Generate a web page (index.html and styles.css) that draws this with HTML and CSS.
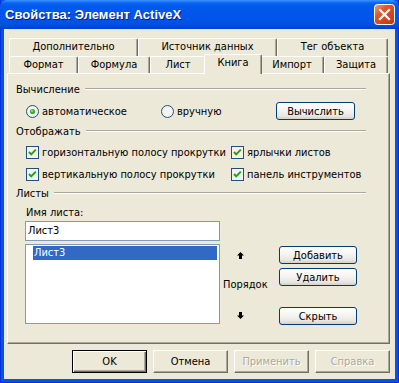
FILE: index.html
```html
<!DOCTYPE html>
<html lang="ru">
<head>
    <meta charset="UTF-8">
    <title>Свойства: Элемент ActiveX</title>
    <link rel="stylesheet" href="styles.css">
</head>
<body>
    <div class="window">
        <div class="titlebar">
            <span class="title">Свойства: Элемент ActiveX</span>
            <span class="close">
                <svg width="21" height="21" viewBox="0 0 21 21">
                    <defs>
                        <linearGradient id="cg" x1="0" y1="0" x2="1" y2="1">
                            <stop offset="0" stop-color="#F0A080"/>
                            <stop offset="0.35" stop-color="#E0582C"/>
                            <stop offset="1" stop-color="#C2300E"/>
                        </linearGradient>
                    </defs>
                    <rect x="0.5" y="0.5" width="20" height="20" rx="3" fill="url(#cg)" stroke="#fff"/>
                    <path d="M6 6 L15 15 M15 6 L6 15" stroke="#fff" stroke-width="2.2" stroke-linecap="square"/>
                </svg>
            </span>
        </div>
        <div class="client">
            <div class="tabs">
                <div class="tab-row back">
                    <div class="tab" style="flex-basis:129px">Дополнительно</div>
                    <div class="tab" style="flex-basis:139px">Источник данных</div>
                    <div class="tab" style="flex-basis:111px">Тег объекта</div>
                </div>
                <div class="tab-row front">
                    <div class="tab" style="flex-basis:69px">Формат</div>
                    <div class="tab" style="flex-basis:72px">Формула</div>
                    <div class="tab" style="flex-basis:56px">Лист</div>
                    <div class="tab active" style="flex-basis:58px">Книга</div>
                    <div class="tab" style="flex-basis:64px">Импорт</div>
                    <div class="tab" style="flex-basis:64px">Защита</div>
                </div>
            </div>

            <div class="panel">
                <div class="group-title first"><span>Вычисление</span><i class="rule"></i></div>
                <div class="calc-row">
                    <label class="option radio-auto">
                        <svg class="radio" width="13" height="13" viewBox="0 0 13 13">
                            <circle cx="6.5" cy="6.5" r="6" fill="#F4F3EE" stroke="#1C5180"/>
                            <circle cx="6.5" cy="6.5" r="2.6" fill="#3DAF2F"/>
                            <circle cx="6" cy="6" r="1" fill="#9BE08C"/>
                        </svg>
                        автоматическое
                    </label>
                    <label class="option radio-manual">
                        <svg class="radio" width="13" height="13" viewBox="0 0 13 13">
                            <circle cx="6.5" cy="6.5" r="6" fill="#F4F3EE" stroke="#1C5180"/>
                        </svg>
                        вручную
                    </label>
                    <button class="btn calc">Вычислить</button>
                </div>

                <div class="group-title"><span>Отображать</span><i class="rule"></i></div>
                <div class="checks">
                    <label class="option"><svg class="check" width="13" height="13" viewBox="0 0 13 13"><rect x="0.5" y="0.5" width="12" height="12" fill="#F4F3EE" stroke="#1C5180"/><polyline points="3,6 5.2,8.4 9.8,3.6" fill="none" stroke="#21A121" stroke-width="2"/></svg>горизонтальную полосу прокрутки</label>
                    <label class="option"><svg class="check" width="13" height="13" viewBox="0 0 13 13"><rect x="0.5" y="0.5" width="12" height="12" fill="#F4F3EE" stroke="#1C5180"/><polyline points="3,6 5.2,8.4 9.8,3.6" fill="none" stroke="#21A121" stroke-width="2"/></svg>ярлычки листов</label>
                    <label class="option"><svg class="check" width="13" height="13" viewBox="0 0 13 13"><rect x="0.5" y="0.5" width="12" height="12" fill="#F4F3EE" stroke="#1C5180"/><polyline points="3,6 5.2,8.4 9.8,3.6" fill="none" stroke="#21A121" stroke-width="2"/></svg>вертикальную полосу прокрутки</label>
                    <label class="option"><svg class="check" width="13" height="13" viewBox="0 0 13 13"><rect x="0.5" y="0.5" width="12" height="12" fill="#F4F3EE" stroke="#1C5180"/><polyline points="3,6 5.2,8.4 9.8,3.6" fill="none" stroke="#21A121" stroke-width="2"/></svg>панель инструментов</label>
                </div>

                <div class="group-title"><span>Листы</span><i class="rule"></i></div>
                <div class="sheets">
                    <div class="sheet-list">
                        <div class="field-label">Имя листа:</div>
                        <div class="textbox">Лист3</div>
                        <div class="listbox">
                            <div class="list-item selected">Лист3</div>
                        </div>
                    </div>
                    <div class="order">
                        <svg class="arrow up" width="7" height="7" viewBox="0 0 7 7"><polygon points="3.5,0 7,3.5 5,3.5 5,7 2,7 2,3.5 0,3.5" fill="#000"/></svg>
                        <div class="order-label">Порядок</div>
                        <svg class="arrow down" width="7" height="7" viewBox="0 0 7 7"><polygon points="2,0 5,0 5,3.5 7,3.5 3.5,7 0,3.5 2,3.5" fill="#000"/></svg>
                    </div>
                    <div class="sheet-buttons">
                        <button class="btn">Добавить</button>
                        <button class="btn">Удалить</button>
                        <button class="btn hide">Скрыть</button>
                    </div>
                </div>
            </div>

            <div class="dialog-buttons">
                <button class="dlg-btn default">OK</button>
                <button class="dlg-btn">Отмена</button>
                <button class="dlg-btn disabled">Применить</button>
                <button class="dlg-btn disabled">Справка</button>
            </div>
        </div>
    </div>
</body>
</html>
```

FILE: styles.css
```css
body {
    margin: 0;
    font-family: "DejaVu Sans Condensed", "DejaVu Sans", sans-serif;
    font-size: 11px;
    color: #000;
    background: #fff;
}
.window {
    width: 399px;
    height: 383px;
    display: flex;
    flex-direction: column;
    background: #0055E5;
    box-shadow: inset 1px 0 #0831D9, inset -1px 0 #0831D9, inset 0 -1px #0831D9;
}
.titlebar {
    height: 29px;
    flex: 0 0 29px;
    display: flex;
    align-items: center;
    justify-content: space-between;
    padding: 0 4px 0 5px;
    background: linear-gradient(to bottom, #3D95FF 0, #0A63F0 3px, #0058EE 7px, #0055EA 18px, #0050E0 25px, #003DC8 29px);
    border-radius: 7px 7px 0 0;
}
.title {
    color: #fff;
    font-family: "Liberation Sans", Arial, sans-serif;
    font-weight: bold;
    font-size: 13px;
    text-shadow: 1px 1px #0A1883;
}
.close {
    display: flex;
    margin-top: -1px;
}
.client {
    flex: 1;
    margin: 0 4px 4px 4px;
    background: #ECE9D8;
    padding: 9px 5px 0 3px;
    display: flex;
    flex-direction: column;
}

/* tabs */
.tabs {
    margin-left: 2px;
    width: 379px;
}
.tab-row {
    display: flex;
}
.tab-row.back {
    height: 18px;
}
.tab-row.front {
    height: 17px;
}
.tab {
    flex-grow: 0;
    flex-shrink: 0;
    box-sizing: border-box;
    height: 18px;
    background: #ECE9D8;
    border-top: 1px solid #fff;
    border-left: 1px solid #fff;
    border-right: 1px solid #716F64;
    box-shadow: inset -1px 0 #ACA899;
    border-radius: 2px 2px 0 0;
    text-align: center;
    line-height: 16px;
}
.front .tab {
    height: 17px;
}
.tab.active {
    height: 20px;
    margin: -2px -2px -1px -2px;
    position: relative;
    z-index: 1;
}

/* panel */
.panel {
    height: 271px;
    box-sizing: border-box;
    border-top: 1px solid #fff;
    border-left: 1px solid #fff;
    border-right: 1px solid #716F64;
    border-bottom: 1px solid #716F64;
    box-shadow: inset -1px -1px #ACA899;
    padding: 0 23px 0 8px;
}
.group-title {
    display: flex;
    align-items: center;
    height: 14px;
    margin-top: 4px;
}
.group-title.first {
    margin-top: 8px;
}
.rule {
    flex: 1;
    margin-left: 5px;
    border-top: 1px solid #ACA899;
    border-bottom: 1px solid #fff;
}
.option {
    display: flex;
    align-items: center;
    white-space: nowrap;
}
.option svg {
    flex: 0 0 13px;
    margin-right: 3px;
}
.calc-row {
    display: flex;
    align-items: center;
    height: 18px;
    margin-top: 6px;
    padding-left: 10px;
}
.radio-auto {
    width: 135px;
}
.radio-manual {
    width: 115px;
}
.btn {
    box-sizing: border-box;
    width: 79px;
    height: 18px;
    padding: 0;
    font: inherit;
    color: #000;
    border: 1px solid #003C74;
    border-radius: 3px;
    background: linear-gradient(to bottom, #FFFFFF 0, #F5F4F0 45%, #E9E7DF 80%, #D6D0C5 100%);
}
.checks {
    display: grid;
    grid-template-columns: 205px auto;
    grid-auto-rows: 16px;
    row-gap: 6px;
    margin-top: 6px;
    padding-left: 10px;
}

/* sheets */
.sheets {
    display: flex;
    margin-top: 6px;
}
.sheet-list {
    width: 195px;
    margin-left: 9px;
}
.field-label {
    height: 14px;
    line-height: 14px;
    padding-left: 1px;
}
.textbox {
    box-sizing: border-box;
    height: 20px;
    margin-top: 1px;
    border: 1px solid #7F9DB9;
    background: #fff;
    padding-left: 2px;
    line-height: 18px;
}
.listbox {
    box-sizing: border-box;
    height: 80px;
    margin-top: 3px;
    border: 1px solid #7F9DB9;
    background: #fff;
    padding: 1px 2px 0 7px;
}
.list-item {
    height: 14px;
    line-height: 14px;
    padding-left: 1px;
}
.list-item.selected {
    background: #316AC5;
    color: #fff;
}
.order {
    width: 59px;
    display: flex;
    flex-direction: column;
}
.arrow {
    margin-left: 17px;
}
.arrow.up {
    margin-top: 46px;
}
.order-label {
    height: 14px;
    line-height: 14px;
    padding-left: 3px;
    margin-top: 19px;
}
.arrow.down {
    margin-top: 20px;
}
.sheet-buttons {
    display: flex;
    flex-direction: column;
    padding-top: 40px;
}
.sheet-buttons .btn {
    width: 78px;
    margin-bottom: 4px;
}
.sheet-buttons .hide {
    margin-top: 17px;
}

/* bottom buttons */
.dialog-buttons {
    display: flex;
    justify-content: flex-end;
    gap: 6px;
    margin-top: 6px;
}
.dlg-btn {
    box-sizing: border-box;
    width: 75px;
    height: 23px;
    padding: 0;
    font: inherit;
    color: #000;
    background: #ECE9D8;
    border: 1px solid;
    border-color: #fff #716F64 #716F64 #fff;
    box-shadow: inset -1px -1px #ACA899;
}
.dlg-btn.default {
    border-color: #000;
    box-shadow: inset 1px 1px #fff, inset -1px -1px #716F64, inset -2px -2px #ACA899;
}
.dlg-btn.disabled {
    color: #ACA899;
    text-shadow: 1px 1px #fff;
}
```
